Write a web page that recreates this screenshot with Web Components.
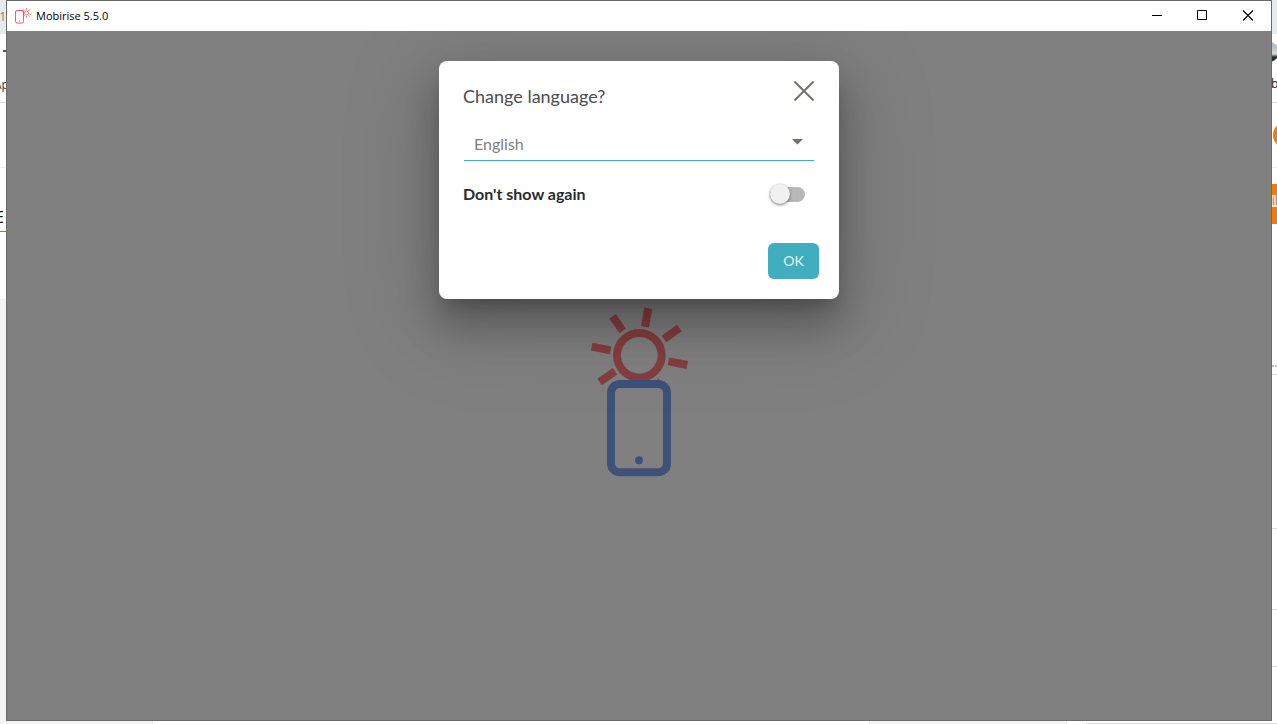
<!DOCTYPE html>
<html lang="en">
<head>
<meta charset="utf-8">
<title>Mobirise 5.5.0</title>
<style>
html, body { height: 100%; margin: 0; }
body { font-family: "Lato", "Open Sans", sans-serif; overflow: hidden; background: #fff; }
</style>
</head>
<body>
<desktop-view></desktop-view>

<template id="desktop-view">
<style>
:host { display: grid; height: 100%; grid-template-columns: 6px minmax(0, 1fr) 5px; grid-template-rows: minmax(0, 1fr) 3px; }
app-window { grid-column: 2; grid-row: 1; }
left-edge { grid-column: 1; grid-row: 1; }
right-edge { grid-column: 3; grid-row: 1; }
bottom-edge { grid-column: 1 / 4; grid-row: 2; }
</style>
<left-edge></left-edge>
<app-window>
  <mobirise-logo></mobirise-logo>
  <language-dialog slot="dialog"></language-dialog>
</app-window>
<right-edge></right-edge>
<bottom-edge></bottom-edge>
</template>

<template id="left-edge">
<style>
:host { display: flex; flex-direction: column; overflow: hidden; font: 12px/16px "Open Sans", sans-serif; background: #fff; }
div { box-sizing: border-box; flex: none; display: flex; justify-content: flex-end; align-items: center; }
.tab { height: 34px; background: #e7ebee; color: #8a7d74; }
.bar { height: 34px; }
.bar::after { content: ""; width: 3px; height: 2px; background: #555; }
.marks { height: 35px; border-bottom: 1px solid #ddd; color: #333; justify-content: flex-start; }
.marks span { margin-left: -6px; }
.gap { height: 65px; border-bottom: 1px solid #eee; }
.head { height: 64px; padding-right: 2px; border-bottom: 1px solid #e2572b; align-items: flex-end; font-size: 16px; line-height: 28px; color: #111; }
.sub { height: 68px; border-bottom: 1px solid #eee; }
.rest { flex: 1; background: #f4f4f4; }
</style>
<div class="tab">1</div><div class="bar"></div><div class="marks"><span>Ap</span></div>
<div class="gap"></div><div class="head">E</div><div class="sub"></div><div class="rest"></div>
</template>

<template id="right-edge">
<style>
:host { display: flex; flex-direction: column; overflow: hidden; font: 12px/16px "Open Sans", sans-serif; background: #fff; }
div { box-sizing: border-box; flex: none; border-bottom: 1px solid #ddd; }
.tab { height: 34px; background: #e7ebee; border: 0; }
.bar { height: 34px; border: 0; padding-top: 8px; }
.face { display: block; width: 20px; height: 20px; margin-left: -13px; border-radius: 50%; background: linear-gradient(#9db3c5, #d9dad2 60%, #26332f 75%); }
.marks { height: 35px; padding-top: 8px; color: #123; }
.marks span { margin-left: -1px; }
.round { height: 65px; padding-top: 19px; border-color: #eee; }
.round span { display: block; width: 26px; height: 26px; margin-left: 1px; border-radius: 50%; background: #f57c00; }
.gap { height: 16px; border: 0; }
.orange { height: 40px; border: 0; background: #f57c00; display: flex; flex-direction: column; justify-content: center; }
.orange span { background: #fbe3d0; color: #e0661a; line-height: 12px; margin-bottom: 6px; }
.dots { height: 151px; display: flex; flex-direction: column; justify-content: flex-end; }
.dots::after { content: ""; border-top: 2px dotted #bbb; margin-bottom: 7px; }
.a { height: 154px; } .b { height: 81px; } .c { height: 57px; }
</style>
<div class="tab"></div><div class="bar"><span class="face"></span></div><div class="marks"><span>b</span></div>
<div class="round"><span></span></div><div class="gap"></div><div class="orange"><span>il</span></div>
<div class="dots"></div><div class="a"></div><div class="b"></div><div class="c"></div>
</template>

<template id="bottom-edge">
<style>
:host { display: grid; grid-template-columns: 153px minmax(0, 1fr) 198px 19px 191px; background: #fff; }
.side { background: #f4f4f4; border-right: 1px solid #e8e8e8; }
.panel { background: #f4f4f4; border: solid #e8e8e8; border-width: 0 1px; }
.card { border-bottom: 1px solid #ddd; }
</style>
<div class="side"></div><div></div><div class="panel"></div><div></div><div class="card"></div>
</template>

<template id="app-window">
<style>
:host { display: flex; flex-direction: column; box-sizing: border-box; border: 1px solid #6b6b6b; background: #808080; }
header { flex: none; display: flex; align-items: center; height: 30px; background: #fff; color: #000; font: 11px/16px "Open Sans", sans-serif; }
.icon { width: 16px; height: 16px; margin: 0 5px 0 8px; }
h1 { margin: 0; flex: 1; font: inherit; }
button { width: 46px; height: 30px; padding: 0; border: 0; background: none; display: grid; place-items: center; }
button svg { width: 12px; height: 12px; }
main { flex: 1; position: relative; display: flex; justify-content: center; align-items: center; padding-top: 38px; min-height: 0; overflow: hidden; }
.layer { position: absolute; inset: 0; display: flex; justify-content: center; align-items: flex-start; padding-top: 30px; }
</style>
<header>
  <svg class="icon" viewBox="0 0 16 16" fill="none" stroke="#f4595f" aria-hidden="true">
    <rect x="0.5" y="2.500" width="8" height="12.500" rx="1.500"/><path d="M4 13h1"/>
    <circle cx="11.500" cy="5" r="2" stroke-width=".8"/>
    <path stroke-width=".7" d="M11.500 0v2M11.500 8v2M6.800 3.300l2 .8M14.200 5.900l2 .8M8.200 1.200l1.400 1.800M13.400 7l1.500 1.800M14.900 1.200l-1.500 1.800M9.600 7L8.500 8.600"/>
  </svg>
  <h1>Mobirise 5.5.0</h1>
  <button aria-label="Minimize"><svg viewBox="0 0 12 12"><path d="M2 5.500h10" stroke="#000"/></svg></button>
  <button aria-label="Maximize"><svg viewBox="0 0 12 12"><path d="M1.500 .5h9v9h-9z" fill="none" stroke="#000"/></svg></button>
  <button aria-label="Close"><svg viewBox="0 0 12 12"><path d="M1 .5l10 10M11 .5L1 10.500" stroke="#000" stroke-width="1.100"/></svg></button>
</header>
<main><slot></slot><div class="layer"><slot name="dialog"></slot></div></main>
</template>

<template id="mobirise-logo">
<style>
:host { display: block; }
svg { display: block; width: 120px; height: 190px; }
</style>
<svg viewBox="-3 0 360 570" fill="none" role="img" aria-label="Mobirise">
  <g stroke="#853e40" stroke-width="24">
    <circle cx="178" cy="166" r="67"/>
    <path d="M205 25l-10 55M98 49l30 44M35 140l57 11M59 246l46-32M252 117l46-33M265 184l57 11"/>
  </g>
  <path d="M228 243l7-8 8 10z" fill="#853e40"/>
  <rect x="93" y="252" width="168" height="265" rx="26" stroke="#3d5179" stroke-width="24"/>
  <circle cx="177" cy="481" r="12" fill="#3d5179"/>
</svg>
</template>

<template id="language-dialog">
<style>
:host { display: block; box-sizing: border-box; width: 400px; max-width: 100%; padding: 20px 20px 20px 24px; border-radius: 8px; background: #fff; color: #333;
  box-shadow: 0 11px 15px -7px rgba(0,0,0,.2), 0 24px 38px 3px rgba(0,0,0,.24), 0 18px 92px 16px rgba(0,0,0,.12); }
.top { display: flex; justify-content: space-between; align-items: flex-start; height: 44px; }
h2 { margin: 3px 0 0; font-size: 18px; line-height: 24px; font-weight: 400; color: #4c4c4c; }
.close { width: 20px; height: 20px; margin-right: 5px; padding: 0; border: 0; background: none; }
.close svg { display: block; }
.pick { display: grid; align-items: center; margin: 4px 5px 0 1px; border-bottom: 1px solid #41aebf; height: 31px; }
select { grid-area: 1 / 1; appearance: none; width: 100%; height: 31px; padding: 0 30px 2px 10px; border: 0; background: none; color: #808279; font: 16px/24px "Lato", sans-serif; outline: 0; }
.pick svg { grid-area: 1 / 1; justify-self: end; margin: 0 11px 5px 0; pointer-events: none; }
.row { display: flex; justify-content: space-between; align-items: center; height: 24px; margin: 21px 14px 0 0; font-size: 16px; line-height: 24px; font-weight: 700; color: #2b2b2b; }
.foot { display: flex; justify-content: flex-end; margin-top: 37px; }
.ok { width: 51px; height: 36px; padding: 0; border: 0; border-radius: 6px; background: #41aebf; color: #e4f5f8; font: 14px/20px "Lato", sans-serif; }
</style>
<div class="top"><h2>Change language?</h2>
<button class="close" aria-label="Close dialog"><svg width="20" height="20" viewBox="0 0 20 20"><path d="M.5.5l19 19M19.5.5l-19 19" stroke="#73756c" stroke-width="2"/></svg></button></div>
<div class="pick"><select aria-label="Language"><option>English</option></select><svg width="11" height="6" viewBox="0 0 11 6" aria-hidden="true"><path d="M0 0h11L5.500 5.500z" fill="#6f716b"/></svg></div>
<div class="row"><label for="again">Don't show again</label><toggle-switch></toggle-switch></div>
<div class="foot"><button class="ok">OK</button></div>
</template>

<template id="toggle-switch">
<style>
:host { display: block; }
input { appearance: none; display: flex; align-items: center; width: 35px; height: 15px; margin: 0; border-radius: 8px; background: #b8b8b8; }
input::before { content: ""; flex: none; width: 20px; height: 20px; border-radius: 50%; background: #f1f1f1; box-shadow: 0 1px 3px rgba(0,0,0,.55); }
input:checked { justify-content: flex-end; background: #a0d7df; }
</style>
<input type="checkbox" role="switch" id="again" aria-label="Don't show again">
</template>

<script>
for (const name of ["toggle-switch", "language-dialog", "mobirise-logo", "left-edge", "right-edge", "bottom-edge", "app-window", "desktop-view"]) {
  customElements.define(name, class extends HTMLElement {
    constructor() {
      super();
      this.attachShadow({ mode: "open" }).append(document.getElementById(name).content.cloneNode(true));
    }
    connectedCallback() {
      if (name !== "language-dialog") return;
      const box = this.shadowRoot.querySelector("toggle-switch").shadowRoot.querySelector("input");
      this.shadowRoot.querySelector("label").onclick = () => box.click();
    }
  });
}
</script>
</body>
</html>
